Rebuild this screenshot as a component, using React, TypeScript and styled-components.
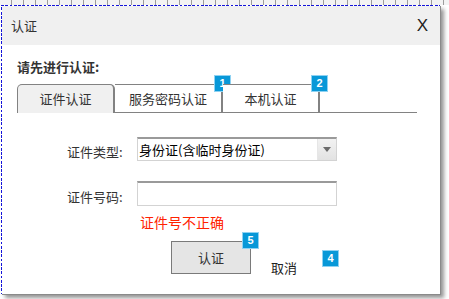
import React from "react";
import styled, { createGlobalStyle } from "styled-components";

const Global = createGlobalStyle`
  html, body {
    margin: 0;
    padding: 0;
    background: #fff;
  }
  body {
    font-family: "Noto Sans CJK SC", "Noto Sans", sans-serif;
    color: #333;
  }
`;

const Screen = styled.div`
  width: 449px;
  height: 299px;
  overflow: hidden;
  background: #fff;
`;

const Ruler = styled.div`
  height: 5px;
  background:
    repeating-linear-gradient(to right, transparent 0 11px, #9c9c9c 11px 12px),
    #f3f3f3;
`;

const Stage = styled.div`
  padding-left: 1px;
`;

const Dialog = styled.div`
  width: 439px;
  height: 289px;
  box-sizing: border-box;
  border-style: solid;
  border-width: 1px 0 0 1px;
  border-image: repeating-linear-gradient(45deg, #1414d9 0 2px, #ffffff 2px 3px) 1;
  background: #fff;
  box-shadow: 1px 1px 0 #8a8a8a, 4px 4px 4px rgba(0, 0, 0, 0.42);
  display: flex;
  flex-direction: column;
`;

const TitleBar = styled.div`
  height: 39px;
  flex: none;
  background: #f0f0f0;
  display: flex;
  align-items: center;
  justify-content: space-between;
  padding: 0 12px 0 9px;
`;

const Title = styled.span`
  font-size: 13px;
  color: #333;
`;

const Close = styled.span`
  font-family: "Liberation Sans", Arial, sans-serif;
  font-size: 17px;
  color: #222;
`;

const Body = styled.div`
  padding: 13px 0 0 15px;
`;

const Intro = styled.div`
  font-size: 13px;
  font-weight: bold;
  line-height: 17px;
  color: #333;
`;

const TabStrip = styled.div`
  margin-top: 9px;
  width: 400px;
  height: 28px;
  display: flex;
  border-bottom: 1px solid #828282;
`;

const Tab = styled.div<{ $w: number; $active?: boolean; $first?: boolean }>`
  position: relative;
  box-sizing: border-box;
  width: ${(p) => p.$w}px;
  height: ${(p) => (p.$active ? 29 : 28)}px;
  margin-bottom: ${(p) => (p.$active ? -1 : 0)}px;
  border-top: 1px solid #828282;
  border-left: ${(p) => (p.$first ? "1px solid #828282" : "none")};
  border-right: 2px solid #828282;
  border-radius: ${(p) => (p.$first ? "5px 5px 0 0" : "0")};
  background: ${(p) => (p.$active ? "#f0f0f0" : "#fff")};
  display: flex;
  align-items: center;
  justify-content: center;
  font-size: 13px;
  color: #333;
  padding-bottom: ${(p) => (p.$active ? 1 : 0)}px;
`;

const Badge = styled.span<{ $top: number; $right?: number; $left?: number }>`
  position: absolute;
  top: ${(p) => p.$top}px;
  ${(p) => (p.$left !== undefined ? `left: ${p.$left}px;` : `right: ${p.$right}px;`)}
  width: 17px;
  height: 17px;
  box-sizing: border-box;
  background: #0898d8;
  border: 1px solid #8fd2f2;
  color: #fff;
  font-family: "Liberation Sans", Arial, sans-serif;
  font-weight: bold;
  font-size: 11px;
  line-height: 15px;
  text-align: center;
`;

const Form = styled.div`
  margin: 24px 0 0 50px;
  display: grid;
  grid-template-columns: 56px 200px;
  column-gap: 14px;
  row-gap: 20px;
`;

const Label = styled.div`
  align-self: end;
  font-size: 13px;
  line-height: 18px;
  color: #333;
  white-space: nowrap;
`;

const Combo = styled.div`
  position: relative;
  height: 24px;
  box-sizing: border-box;
  border: 1px solid #d3d3d3;
  border-top: 2px solid #9a9a9a;
  display: flex;
  align-items: center;
  font-size: 13px;
  color: #000;
  padding-left: 1px;
`;

const ComboValue = styled.span`
  flex: 1;
  white-space: nowrap;
`;

const ComboArrow = styled.span`
  width: 18px;
  height: 100%;
  background: linear-gradient(#f2f2f2, #e2e2e2);
  border-left: 1px solid #e6e6e6;
  display: flex;
  align-items: center;
  justify-content: center;
  &::after {
    content: "";
    border-left: 4px solid transparent;
    border-right: 4px solid transparent;
    border-top: 5px solid #6b6b6b;
  }
`;

const TextInput = styled.input`
  height: 25px;
  box-sizing: border-box;
  margin: 0;
  border: 1px solid #d3d3d3;
  border-top: 2px solid #9a9a9a;
  padding: 0 3px;
  font-family: inherit;
  font-size: 13px;
  outline: none;
`;

const ErrorText = styled.div`
  grid-column: 2;
  margin-top: -13px;
  padding-left: 3px;
  font-size: 14px;
  line-height: 18px;
  color: #ff2200;
`;

const Actions = styled.div`
  margin: 10px 0 0 154px;
  display: flex;
  align-items: flex-start;
  gap: 20px;
`;

const PrimaryButton = styled.button`
  position: relative;
  width: 80px;
  height: 33px;
  margin: 0;
  padding: 0;
  box-sizing: border-box;
  background: #e5e5e5;
  border: 1px solid #7a7a7a;
  font-family: inherit;
  font-size: 13px;
  color: #333;
`;

const CancelLink = styled.span`
  position: relative;
  margin-top: 18px;
  font-size: 13px;
  line-height: 18px;
  color: #222;
`;

export default function App() {
  return (
    <Screen>
      <Global />
      <Ruler />
      <Stage>
        <Dialog>
          <TitleBar>
            <Title>认证</Title>
            <Close>X</Close>
          </TitleBar>
          <Body>
            <Intro>请先进行认证:</Intro>
            <TabStrip>
              <Tab $w={98} $first $active>
                证件认证
              </Tab>
              <Tab $w={108}>
                服务密码认证
                <Badge $top={-10} $right={-10}>1</Badge>
              </Tab>
              <Tab $w={97}>
                本机认证
                <Badge $top={-10} $right={-10}>2</Badge>
              </Tab>
            </TabStrip>
            <Form>
              <Label>证件类型:</Label>
              <Combo>
                <ComboValue>身份证(含临时身份证)</ComboValue>
                <ComboArrow />
              </Combo>
              <Label>证件号码:</Label>
              <TextInput type="text" />
              <ErrorText>证件号不正确</ErrorText>
            </Form>
            <Actions>
              <PrimaryButton>
                认证
                <Badge $top={-10} $right={-9}>5</Badge>
              </PrimaryButton>
              <CancelLink>
                取消
                <Badge $top={-9} $left={51}>4</Badge>
              </CancelLink>
            </Actions>
          </Body>
        </Dialog>
      </Stage>
    </Screen>
  );
}
